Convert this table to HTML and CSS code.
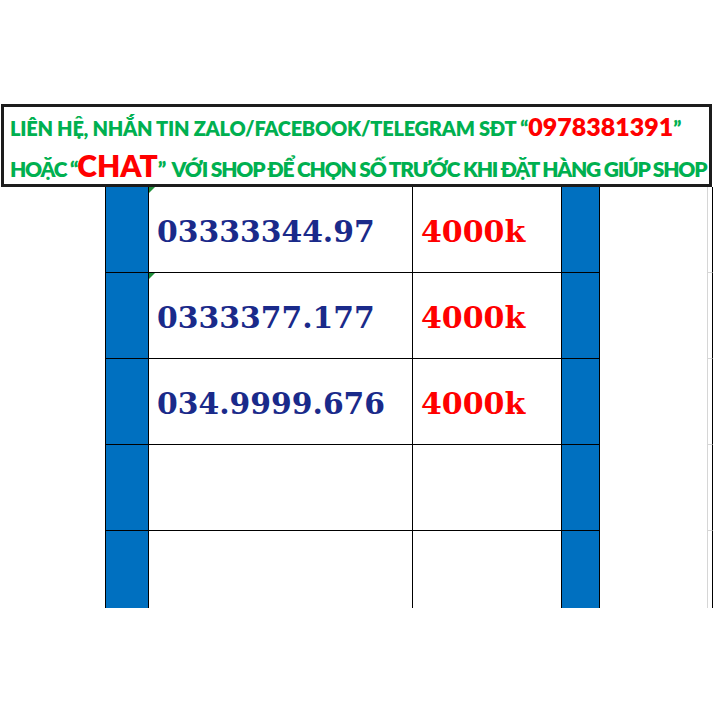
FILE: index.html
```html
<!DOCTYPE html>
<html lang="vi">
<head>
<meta charset="utf-8">
<title>Sim số đẹp</title>
<link rel="stylesheet" href="styles.css">
</head>
<body>
<div class="page">
  <div class="banner">
    <div class="line l1"><span class="g">LIÊN HỆ, NHẮN TIN ZALO/FACEBOOK/TELEGRAM SĐT “</span><span class="r phone">0978381391</span><span class="g">”</span></div>
    <div class="line l2"><span class="g">HOẶC “</span><span class="r chat">CHAT</span><span class="g">”&nbsp; VỚI SHOP ĐỂ CHỌN SỐ TRƯỚC KHI ĐẶT HÀNG GIÚP SHOP</span></div>
  </div>
  <div class="sheet">
    <div class="c blue"></div><div class="c num"><i class="tri"></i>03333344.97</div><div class="c price">4000k</div><div class="c blue2"></div><div class="c wh"></div><div class="c tick"></div>
    <div class="c blue"></div><div class="c num"><i class="tri"></i>0333377.177</div><div class="c price">4000k</div><div class="c blue2"></div><div class="c wh"></div><div class="c tick"></div>
    <div class="c blue"></div><div class="c num">034.9999.676</div><div class="c price">4000k</div><div class="c blue2"></div><div class="c wh"></div><div class="c tick"></div>
    <div class="c blue"></div><div class="c num"></div><div class="c price"></div><div class="c blue2"></div><div class="c wh"></div><div class="c tick"></div>
    <div class="c blue last"></div><div class="c num last"></div><div class="c price last"></div><div class="c blue2 last"></div><div class="c wh last"></div><div class="c tick last"></div>
  </div>
</div>
</body>
</html>
```
FILE: styles.css
```css
html, body {
  margin: 0;
  padding: 0;
  background: #ffffff;
}
.page {
  padding-top: 104px;
  width: 716px;
  height: 716px;
  box-sizing: border-box;
  overflow: hidden;
}
.banner {
  margin-left: 1px;
  width: 711px;
  height: 83px;
  box-sizing: border-box;
  border: 3px solid #1c1c1c;
  padding: 0 0 0 6px;
  font-family: Lato, "Noto Sans", sans-serif;
  font-weight: 800;
  white-space: nowrap;
}
.line {
  display: flex;
  align-items: baseline;
}
.l1 {
  height: 36px;
  padding-top: 4px;
  font-size: 20px;
  letter-spacing: -0.25px;
}
.l2 {
  height: 36px;
  font-size: 21px;
  letter-spacing: -1.2px;
}
.g { color: #00b050; }
.r { color: #ff0000; }
.phone { font-size: 25px; letter-spacing: 0; }
.chat { font-size: 30px; letter-spacing: 0; }

.sheet {
  margin-left: 105px;
  display: grid;
  grid-template-columns: 44px 264px 148px 39px 108px 5px;
  grid-template-rows: 86px 86px 86px 86px 77px;
}
.c {
  box-sizing: border-box;
  position: relative;
  border-bottom: 1px solid #000;
}
.c.last { border-bottom: none; }
.blue {
  background: #0070c0;
  border-left: 1px solid #000;
  border-right: 1px solid #000;
}
.num, .price {
  display: flex;
  align-items: center;
  padding: 4px 0 0 8px;
  font-family: "DejaVu Serif", "Liberation Serif", serif;
  font-weight: 700;
  font-size: 30px;
  border-right: 1px solid #000;
}
.num { color: #1a2a8a; font-size: 29.8px; }
.price { color: #ff0000; border-right: none; }
.blue2 {
  background: #0070c0;
  border-left: 1px solid #000;
  border-right: 1px solid #000;
}
.wh {
  border-bottom: none;
  border-right: 1px solid #d6d6d6;
}
.tick {
  border-bottom: 1px solid #d6d6d6;
  border-right: 1px solid #000;
}
.tick.last { border-bottom: none; }
.tri {
  position: absolute;
  left: 0;
  top: 0;
  width: 0;
  height: 0;
  border-top: 6px solid #1f8f3a;
  border-right: 6px solid transparent;
}
```
